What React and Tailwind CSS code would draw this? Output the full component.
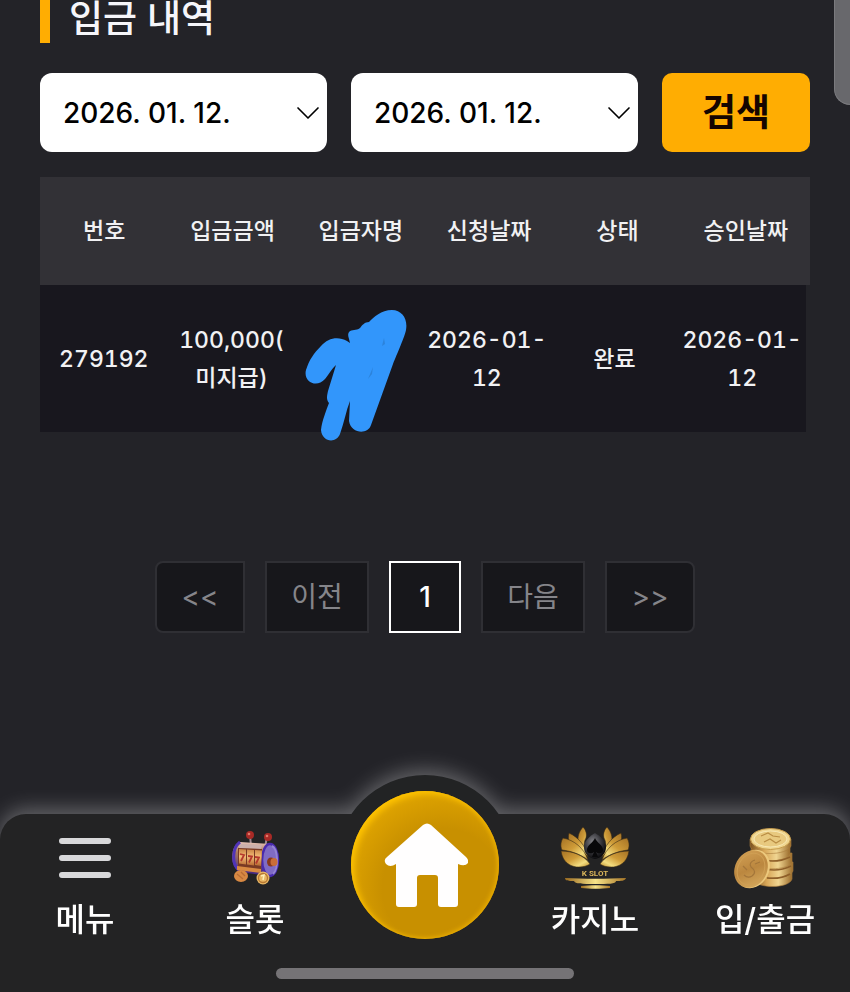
import { ChevronDown } from 'lucide-react'

const columns = ['번호', '입금금액', '입금자명', '신청날짜', '상태', '승인날짜']

const deposits = [
  {
    id: '279192',
    amount: '100,000(\n미지급)',
    requestedAt: '2026-01-\n12',
    status: '완료',
    approvedAt: '2026-01-\n12',
  },
]

const pages = [
  { label: '<<', className: 'w-[90px] rounded-l-lg border-[#2f2f34] text-[#85858a]' },
  { label: '이전', className: 'w-[104px] border-[#2f2f34] text-[#85858a]' },
  { label: '1', className: 'w-[72px] border-white font-medium text-white', current: true },
  { label: '다음', className: 'w-[104px] border-[#2f2f34] text-[#85858a]' },
  { label: '>>', className: 'w-[90px] rounded-r-lg border-[#2f2f34] text-[#85858a]' },
]

function DateSelect({ label }) {
  return (
    <div className="relative min-w-0 flex-1">
      <select
        aria-label={label}
        className="h-[79px] w-full appearance-none rounded-xl bg-white pl-[23px] text-[28px] font-medium text-black"
      >
        <option>2026. 01. 12.</option>
      </select>
      <ChevronDown
        className="pointer-events-none absolute right-1 top-[25px] size-[30px] text-black"
        strokeWidth={1}
        viewBox="3 3 18 18"
      />
    </div>
  )
}

function Scribble() {
  return (
    <svg className="absolute left-[10px] top-[25px] h-[131px] w-[102px]" viewBox="0 0 102 131" aria-hidden="true">
      <path
        fill="#3296fb"
        d="M1 60C4 50 9 43 16 36c7-8 17-10 26-5l3 2c-1-5-3-8-1-11 3-3 7-1 11-4 2-3 5-6 9-6C69 7 76 0 87 0c10 0 16 9 14 20-1 6-9 24-13 34L66 115c-3 10-20 9-22-4l1-20c-4 10-6 22-10 33-4 10-18 8-19-4 1-9 5-19 8-27-3-4-2-7-1-12l8-26c-5 5-7 9-11 14C11 79-2 71 1 60Z"
      />
      <path fill="#2c83db" d="m79 28-2 8 3-2ZM68 57l-5 12 4-5Z" />
    </svg>
  )
}

function DepositTable() {
  return (
    <table className="mt-[25px] block text-center text-[23px] font-medium text-[#f1f1f3]">
      <thead className="block bg-[#323136]">
        <tr className="grid h-[108px] grid-cols-6 items-center">
          {columns.map((column) => (
            <th className="font-medium" key={column}>
              {column}
            </th>
          ))}
        </tr>
      </thead>
      <tbody className="block pr-1">
        {deposits.map((row) => (
          <tr
            className="grid min-h-[147px] grid-cols-6 items-stretch whitespace-pre-line bg-[#18171e] leading-[38px] tabular-nums"
            key={row.id}
          >
            <td className="flex items-center justify-center">{row.id}</td>
            <td className="flex items-center justify-center">{row.amount}</td>
            <td className="relative">
              <Scribble />
            </td>
            <td className="flex items-center justify-center">{row.requestedAt}</td>
            <td className="flex items-center justify-center">{row.status}</td>
            <td className="flex items-center justify-center">{row.approvedAt}</td>
          </tr>
        ))}
      </tbody>
    </table>
  )
}

function MenuIcon() {
  return (
    <svg className="h-16 w-16" viewBox="0 0 64 64" stroke="#d8d8da" strokeWidth="6" strokeLinecap="round">
      <path d="M9 15h46M9 32h46M9 49h46" />
    </svg>
  )
}

function SlotIcon() {
  return (
    <svg className="h-16 w-16" viewBox="0 0 64 64" fill="none">
      <defs>
        <linearGradient id="slotBody" x1="0" y1="0" x2="0" y2="1">
          <stop offset="0" stopColor="#e7c5b8" />
          <stop offset=".3" stopColor="#a8785f" />
          <stop offset="1" stopColor="#3b2188" />
        </linearGradient>
        <linearGradient id="slotReel" x1="0" y1="0" x2="0" y2="1">
          <stop offset="0" stopColor="#c98243" />
          <stop offset=".45" stopColor="#f3bd78" />
          <stop offset="1" stopColor="#b5662e" />
        </linearGradient>
      </defs>
      <path d="m27 9 1 11M44 10l-2 12" stroke="#a08a92" strokeWidth="2" />
      <circle cx="27" cy="9" r="4" fill="#a82a26" />
      <circle cx="45" cy="11" r="4" fill="#a82a26" />
      <circle cx="26" cy="8" r="1.3" fill="#e07a6a" />
      <circle cx="44" cy="10" r="1.3" fill="#e07a6a" />
      <path d="M17 16 47 18 46 50 17 46C6 40 7 20 17 16Z" fill="url(#slotBody)" />
      <path d="M17 16C9 22 8 39 17 45" stroke="#5034b8" strokeWidth="3" />
      <ellipse cx="47" cy="34" rx="8" ry="16" fill="#7f6bc4" stroke="#482aae" strokeWidth="2.5" />
      <path d="M49 20c6 3 7 22 1 28" stroke="#9484d4" strokeWidth="2" />
      <path d="m17 18 22 1-1 4-22-1Z" fill="#cbb0ac" />
      <path d="m15 22 24 1-1 22-23-3Z" fill="#793a24" />
      <path d="m16 23 7 .5v15l-7-1Zm8 .6 7 .4v15.500l-7-1Zm8 .5 7 .4-1 15.500-6-1Z" fill="url(#slotReel)" />
      <path d="m17 28 4 1-3 6m7-5 4 .5-3 6m6-5.500 4 .5-3 6" stroke="#b5382c" strokeWidth="1.8" />
      <path d="m14 40 24 3v4l-24-3Z" fill="#d98a42" />
      <ellipse cx="48" cy="36" rx="4" ry="4.500" fill="#87381f" />
      <ellipse cx="51" cy="36" rx="3.500" ry="4" fill="#c96d38" />
      <ellipse cx="18" cy="50" rx="7" ry="6" fill="#d88943" />
      <path d="m14 48 6 5M18 46l4 4" stroke="#b96c34" strokeWidth="1.3" />
      <circle cx="40" cy="52" r="6.500" fill="#e9b866" />
      <circle cx="40" cy="52" r="4.500" stroke="#b77732" strokeWidth="1.3" />
      <path d="m38 50 3-1-1 5" stroke="#fff0b6" strokeWidth="1.5" />
    </svg>
  )
}

function Petals({ transform }) {
  return (
    <g fill="url(#petal)" stroke="#3a2c14" strokeWidth=".6" transform={transform}>
      <path d="M24 1c3 3 4 7 3 11-3 5-2 12 2 18C19 23 15 11 24 1Z" />
      <path d="M10 7c9 4 17 13 19 24-5-6-11-10-18-13-2-4-2-8-1-11Z" />
      <path d="M4 12c11 2 21 10 25 22-8-6-17-9-26-10-2-4-1-9 1-12Z" />
      <path d="M2 25c11 0 23 4 29 13C24 43 5 44 2 25Z" />
    </g>
  )
}

function CasinoIcon() {
  return (
    <svg className="h-16 w-[72px]" viewBox="0 0 72 64">
      <defs>
        <linearGradient id="petal" x1="0" y1="0" x2="1" y2="1">
          <stop offset="0" stopColor="#a57225" />
          <stop offset=".45" stopColor="#cf9c38" />
          <stop offset=".75" stopColor="#f3dd80" />
          <stop offset="1" stopColor="#c08c28" />
        </linearGradient>
        <linearGradient id="goldLine">
          <stop offset="0" stopColor="#9b6b20" />
          <stop offset=".5" stopColor="#f7e489" />
          <stop offset="1" stopColor="#a77627" />
        </linearGradient>
        <radialGradient id="gem" cx=".4" cy=".35" r=".65">
          <stop offset="0" stopColor="#85858a" />
          <stop offset=".55" stopColor="#3b3b40" />
          <stop offset="1" stopColor="#0b0b0e" />
        </radialGradient>
      </defs>
      <Petals />
      <Petals transform="translate(72 0) scale(-1 1)" />
      <path d="M36 7c5 3 11 8 11 14 0 7-5 11-11 12-6-1-11-5-11-12 0-6 6-11 11-14Z" fill="url(#gem)" />
      <path d="M36 12c2 5 8 7 8 12 0 4-5 4-7 2l2 5h-6l2-5c-2 2-7 2-7-2 0-5 6-7 8-12Z" fill="#08080a" />
      <text
        x="36"
        y="50"
        fill="#d9b55a"
        fontFamily="Roboto, sans-serif"
        fontSize="8"
        fontWeight="700"
        textAnchor="middle"
      >
        K SLOT
      </text>
      <path
        d="M6 52c18 1 42 1 61 0-1 3-5 3-10 3 0 3-8 3-21 3s-20 0-21-3c-5 0-9 0-9-3Z"
        fill="url(#goldLine)"
      />
      <path d="M22 60c9-1 21-1 29 0v2c-9 1-20 1-29 0Z" fill="url(#goldLine)" />
    </svg>
  )
}

function CoinsIcon() {
  return (
    <svg className="h-16 w-16" viewBox="0 0 64 64">
      <defs>
        <linearGradient id="coinEdge">
          <stop offset="0" stopColor="#79501f" />
          <stop offset=".35" stopColor="#d8a758" />
          <stop offset=".65" stopColor="#f0d591" />
          <stop offset="1" stopColor="#9b6c2c" />
        </linearGradient>
        <linearGradient id="coinFace" x1="0" y1="0" x2="1" y2="1">
          <stop offset="0" stopColor="#d6a458" />
          <stop offset=".5" stopColor="#bb873f" />
          <stop offset="1" stopColor="#dcb266" />
        </linearGradient>
      </defs>
      <g fill="url(#coinEdge)" stroke="#a97c3c" strokeWidth=".6">
        <path d="M20 46v7c3 10 36 10 39 0v-8Z" />
        <path d="M20 37v8c3 9 37 9 40 0v-9Z" />
        <path d="M19 28v8c3 9 37 9 40 0v-9Z" />
        <path d="M18 20v8c3 9 36 9 39 0v-9Z" />
        <path d="M17 13v7c3 10 37 10 41 0v-7Z" />
      </g>
      <path d="M30 34c9 2 19 1 27-3M32 43c9 2 18 1 26-3M34 52c8 1 16 0 23-4" stroke="#8e5f29" strokeWidth="1.5" fill="none" />
      <ellipse cx="37.5" cy="13" rx="20" ry="10.5" fill="#f0d690" stroke="#c59a4b" />
      <ellipse cx="37.5" cy="13" rx="16.5" ry="8" fill="#e8c97f" stroke="#f7e8b5" />
      <path d="m28 10 7-3 5 3 7 1m-16 5 6-3 6 4 5-3" stroke="#b98d44" strokeWidth="1.2" fill="none" />
      <ellipse cx="20" cy="43" rx="16" ry="20" fill="#ecc87c" transform="rotate(28 20 43)" />
      <ellipse cx="18" cy="43" rx="16" ry="19.5" fill="url(#coinFace)" transform="rotate(28 18 43)" />
      <ellipse cx="18" cy="43" rx="13" ry="16.5" fill="none" stroke="#cf9f54" transform="rotate(28 18 43)" />
      <path d="M22 34c-4 1-6 4-4 7 4 3 5 6 1 9-3 2-6 1-8-1m-1-9 4 4m8-6 5-2" stroke="#a4763a" strokeWidth="1.2" fill="none" />
    </svg>
  )
}

function HomeIcon() {
  return (
    <svg className="size-[86px]" viewBox="0 0 86 86" fill="#fffefe">
      <path d="M41 3q4-3 8 0l35 32q3 3 2 6-3 4-10 1v40q0 3-3 3H59q-3 0-3-3V56q0-3-3-3H38q-3 0-3 3v26q0 3-3 3H17q-3 0-3-3V42q-6 4-10 0-3-4 1-7Z" />
    </svg>
  )
}

function NavItem({ label, children }) {
  return (
    <a className="flex flex-col items-center gap-1.5 pt-3" href="#">
      {children}
      <span className="whitespace-nowrap text-[32px] font-medium leading-[48px] text-white">{label}</span>
    </a>
  )
}

function BottomNav() {
  return (
    <nav className="relative mt-auto [filter:drop-shadow(0_-5px_10px_rgba(255,255,255,0.3))]">
      <div className="absolute left-1/2 top-[-39px] size-[178px] -translate-x-1/2 rounded-full bg-[#222324]" />
      <div className="relative rounded-t-[26px] bg-[#232324]">
        <div className="grid h-[154px] grid-cols-5">
          <NavItem label="메뉴">
            <MenuIcon />
          </NavItem>
          <NavItem label="슬롯">
            <SlotIcon />
          </NavItem>
          <a
            aria-label="홈"
            className="-mt-[23px] flex size-[148px] items-center justify-center justify-self-center rounded-full bg-[radial-gradient(circle_at_62%_66%,#c89000_45%,#dda200_72%,#f4b900_96%)] shadow-[inset_3px_3px_6px_#ffc400,inset_-2px_-1px_4px_#e5a800]"
            href="#"
          >
            <HomeIcon />
          </a>
          <NavItem label="카지노">
            <CasinoIcon />
          </NavItem>
          <NavItem label="입/출금">
            <CoinsIcon />
          </NavItem>
        </div>
        <div className="pb-[13px]">
          <div className="mx-auto h-[11px] w-[35%] rounded-full bg-[#757376]" />
        </div>
      </div>
    </nav>
  )
}

export default function App() {
  return (
    <div className="relative flex min-h-screen flex-col overflow-hidden bg-[#232328] font-['Inter','Noto_Sans_CJK_KR',sans-serif]">
      <div className="absolute right-0 top-0 h-[105px] w-4 rounded-bl-2xl border-b border-l border-[#7a7a7e] bg-[#68686c]" />
      <main className="px-10 pb-12">
        <h1 className="h-[43px] border-l-[10px] border-[#ffad02] pl-[19px] text-[37px] font-medium leading-[38px] text-[#f6f6fa]">
          입금 내역
        </h1>
        <form className="mt-[30px] flex gap-6" onSubmit={(e) => e.preventDefault()}>
          <DateSelect label="시작일" />
          <DateSelect label="종료일" />
          <button
            className="h-[79px] w-[148px] rounded-[10px] bg-[#ffad02] text-[37px] font-bold text-[#160500]"
            type="submit"
          >
            검색
          </button>
        </form>
        <DepositTable />
        <div className="mt-[129px] flex justify-center gap-5">
          {pages.map((page) => (
            <button
              aria-current={page.current ? 'page' : undefined}
              className={`h-[72px] border-2 bg-[#17171b] text-[28px] ${page.className}`}
              key={page.label}
              type="button"
            >
              {page.label}
            </button>
          ))}
        </div>
      </main>
      <BottomNav />
    </div>
  )
}
